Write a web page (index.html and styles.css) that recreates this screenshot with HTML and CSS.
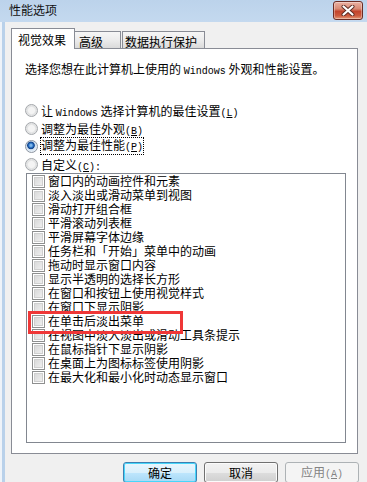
FILE: index.html
```html
<!DOCTYPE html>
<html lang="zh-CN">
<head>
<meta charset="utf-8">
<title>性能选项</title>
<link rel="stylesheet" href="styles.css">
</head>
<body>
<div class="win">
  <div class="titlebar">
    <span class="title">性能选项</span>
    <div class="close">
      <svg width="14" height="11" viewBox="0 0 14 11">
        <path d="M2.5 1.5 L11.5 9.5 M11.5 1.5 L2.5 9.5" stroke="#5a2a22" stroke-width="4" stroke-linecap="round" fill="none"/>
        <path d="M2.5 1.5 L11.5 9.5 M11.5 1.5 L2.5 9.5" stroke="#ffffff" stroke-width="2.2" stroke-linecap="round" fill="none"/>
      </svg>
    </div>
  </div>
  <div class="body">
    <div class="tabs">
      <div class="tab active">视觉效果</div>
      <div class="tab t2">高级</div>
      <div class="tab t3">数据执行保护</div>
    </div>
    <div class="panel">
      <p class="desc">选择您想在此计算机上使用的 <span class="lat">Windows</span> 外观和性能设置。</p>
      <div class="radios">
        <div class="radio-row"><span class="radio"></span><span>让 <span class="lat">Windows</span> 选择计算机的最佳设置<span class="lat">(<u>L</u>)</span></span></div>
        <div class="radio-row"><span class="radio"></span><span>调整为最佳外观<span class="lat">(<u>B</u>)</span></span></div>
        <div class="radio-row"><span class="radio on"></span><span class="focus">调整为最佳性能<span class="lat">(<u>P</u>)</span></span></div>
        <div class="radio-row"><span class="radio"></span><span>自定义<span class="lat">(<u>C</u>):</span></span></div>
      </div>
      <div class="list">
        <div class="item"><span class="chk"></span>窗口内的动画控件和元素</div>
        <div class="item"><span class="chk"></span>淡入淡出或滑动菜单到视图</div>
        <div class="item"><span class="chk"></span>滑动打开组合框</div>
        <div class="item"><span class="chk"></span>平滑滚动列表框</div>
        <div class="item"><span class="chk"></span>平滑屏幕字体边缘</div>
        <div class="item"><span class="chk"></span>任务栏和「开始」菜单中的动画</div>
        <div class="item"><span class="chk"></span>拖动时显示窗口内容</div>
        <div class="item"><span class="chk"></span>显示半透明的选择长方形</div>
        <div class="item"><span class="chk"></span>在窗口和按钮上使用视觉样式</div>
        <div class="item"><span class="chk"></span>在窗口下显示阴影</div>
        <div class="item"><span class="chk"></span>在单击后淡出菜单</div>
        <div class="item"><span class="chk"></span>在视图中淡入淡出或滑动工具条提示</div>
        <div class="item"><span class="chk"></span>在鼠标指针下显示阴影</div>
        <div class="item"><span class="chk"></span>在桌面上为图标标签使用阴影</div>
        <div class="item"><span class="chk"></span>在最大化和最小化时动态显示窗口</div>
        <div class="highlight"></div>
      </div>
    </div>
    <div class="buttons">
      <button class="btn default">确定</button>
      <button class="btn">取消</button>
      <button class="btn disabled">应用<span class="lat">(<u>A</u>)</span></button>
    </div>
  </div>
</div>
</body>
</html>
```

FILE: styles.css
```css
* { box-sizing: border-box; }
html, body { margin: 0; padding: 0; }
body {
  width: 367px;
  height: 482px;
  overflow: hidden;
  background: #f0f0f0;
  font-family: "Noto Sans CJK SC", "Noto Sans", sans-serif;
  font-size: 12px;
  color: #000;
}
.win {
  display: flex;
  flex-direction: column;
  height: 482px;
}
.titlebar {
  height: 22px;
  display: flex;
  align-items: center;
  justify-content: space-between;
  padding: 0 4px 0 9px;
  background: linear-gradient(#bcd3eb, #c4d9ef);
  flex: none;
}
.title {
  font-size: 12px;
  line-height: 14px;
  color: #111;
  margin-top: -2px;
}
.close {
  width: 30px;
  height: 19px;
  margin-top: -2px;
  border: 1px solid #6b2c24;
  border-radius: 3px;
  background: linear-gradient(#eab1a3 0%, #d98a74 40%, #c3442c 55%, #cc5a3e 80%, #e49a78 100%);
  display: flex;
  align-items: center;
  justify-content: center;
  box-shadow: inset 0 0 0 1px rgba(255,255,255,0.35);
}
.body {
  flex: 1;
  padding: 6px 8px 0 11px;
  background: linear-gradient(to right, #eef3f9 0 2px, #b9d1ea 2px 5px, #f0f0f0 5px);
}
.tabs {
  display: flex;
  align-items: flex-end;
  height: 20px;
}
.tab {
  height: 17px;
  border: 1px solid #898c95;
  border-bottom: none;
  background: linear-gradient(#f6f6f6, #ececec 50%, #dadada);
  line-height: 15px;
  white-space: nowrap;
}
.tab.active {
  height: 21px;
  width: 64px;
  margin-bottom: -1px;
  background: #fff;
  padding: 3px 0 0 6px;
  position: relative;
  z-index: 1;
}
.tab.t2 {
  width: 47px;
  margin-left: -1px;
  padding: 2px 0 0 4px;
}
.tab.t3 {
  width: 83px;
  margin-left: 1px;
  padding: 2px 0 0 2px;
}
.panel {
  width: 347px;
  height: 406px;
  border: 1px solid #898c95;
  background: #fff;
  padding: 13px 0 0 13px;
}
.desc {
  margin: 0;
  line-height: 14px;
  white-space: nowrap;
}
.lat {
  font-family: "Liberation Mono", "DejaVu Sans Mono", monospace;
  font-size: 10px;
}
.radios {
  margin-top: 22px;
}
.radio-row {
  height: 18px;
  display: flex;
  align-items: center;
  gap: 3px;
  white-space: nowrap;
}
.radio {
  width: 13px;
  height: 13px;
  border-radius: 50%;
  border: 1px solid #a4a7ab;
  background: radial-gradient(circle at 50% 50%, #f4f4f4 0 3px, #dfe0e1 4.5px, #ececec 6px);
  flex: none;
}
.radio.on {
  border-color: #8d95a0;
  background: radial-gradient(circle at 45% 40%, #7fb6ea 0 1px, #2a74c6 2.2px, #103f86 3.4px, #cfe0f0 4.2px, #e6eef6 6px);
}
.focus {
  outline: 1px dotted #000;
  outline-offset: 0;
  line-height: 13px;
}
.list {
  position: relative;
  margin-left: 1px;
  margin-top: 0;
  width: 320px;
  height: 270px;
  border: 1px solid #828790;
  background: #fff;
}
.item {
  height: 14px;
  display: flex;
  align-items: center;
  gap: 3px;
  padding-left: 5px;
  white-space: nowrap;
  line-height: 14px;
}
.chk {
  width: 13px;
  height: 13px;
  flex: none;
  border: 1px solid #8e8f8f;
  background: linear-gradient(135deg, #d4d4d4, #f4f4f4);
  box-shadow: inset 0 0 0 1px #ffffff, inset 0 0 0 2px #cfcfcf;
}
.highlight {
  position: absolute;
  left: 1px;
  top: 137px;
  width: 155px;
  height: 23px;
  border: 3px solid #ef3737;
}
.buttons {
  display: flex;
  justify-content: flex-end;
  gap: 7px;
  margin-top: 8px;
  padding-right: 0;
}
.btn {
  width: 74px;
  height: 21px;
  font-family: "Noto Sans CJK SC", sans-serif;
  font-size: 12px;
  line-height: 15px;
  padding: 0;
  border: 1px solid #707070;
  border-radius: 3px;
  background: linear-gradient(#f2f2f2, #ebebeb 50%, #dddddd 51%, #cfcfcf);
  color: #000;
  box-shadow: inset 0 0 0 1px #fbfbfb;
}
.btn.default {
  border-color: #3c7fb1;
  background: linear-gradient(#eaf6fd, #d9f0fc 50%, #bee6fd 51%, #a7d9f5);
  box-shadow: inset 0 0 0 1px #48d6fa;
}
.btn.disabled {
  border-color: #adb2b5;
  background: #f4f4f4;
  color: #838383;
  box-shadow: none;
}
```
